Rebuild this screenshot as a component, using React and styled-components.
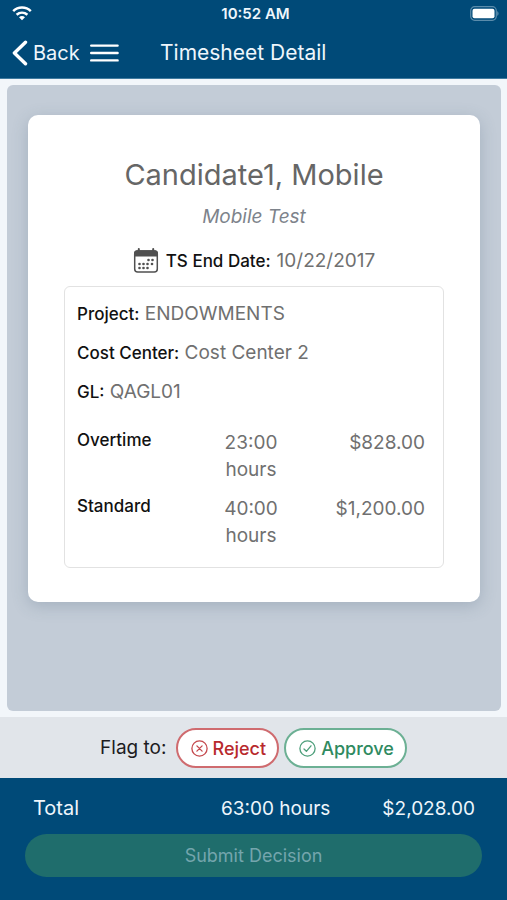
import styled, { createGlobalStyle } from "styled-components";

const GlobalStyle = createGlobalStyle`
  * {
    box-sizing: border-box;
  }
  body {
    margin: 0;
    background: #f2f6fa;
    font-family: Inter, "Liberation Sans", sans-serif;
    font-size: 19px;
    line-height: 27px;
    color: #707070;
  }
  button {
    font-family: inherit;
  }
`;

const Page = styled.div`
  display: flex;
  flex-direction: column;
  min-height: 100vh;
`;

const TopBar = styled.header`
  background: #004a78;
  color: #eef6fc;
  border-bottom: 1px solid #3f7ba0;
`;
const StatusBar = styled.div`
  display: grid;
  grid-template-columns: 1fr auto 1fr;
  align-items: center;
  height: 27px;
  padding: 0 8px 0 12px;
  font-size: 15px;
  font-weight: 600;
`;
const BatteryBox = styled.span`
  display: flex;
  justify-content: flex-end;
`;
const NavBar = styled.nav`
  display: grid;
  grid-template-columns: 148px 1fr;
  align-items: center;
  height: 51px;
  padding: 0 12px;
`;
const NavActions = styled.div`
  display: flex;
  align-items: center;
  gap: 10px;
`;
const NavButton = styled.button`
  display: flex;
  align-items: center;
  gap: 5px;
  padding: 0;
  border: 0;
  background: none;
  color: inherit;
  font-size: 20px;
`;
const Title = styled.h1`
  margin: 0;
  font-size: 21px;
  font-weight: 400;
  white-space: nowrap;
`;

const Content = styled.main`
  flex: 1;
  display: flex;
  padding: 6px 6px 6px 7px;
`;
const Panel = styled.div`
  flex: 1;
  padding: 30px 21px;
  border-radius: 6px;
  background: #c3ccd7;
`;
const Card = styled.section`
  padding: 40px 36px 34px;
  border-radius: 10px;
  background: #ffffff;
  box-shadow: 0 4px 16px rgba(70, 95, 120, 0.25);
`;
const Name = styled.h2`
  margin: 0;
  font-size: 29px;
  font-weight: 400;
  line-height: 40px;
  text-align: center;
  color: #666666;
`;
const JobTitle = styled.p`
  margin: 8px 0 17px;
  font-style: italic;
  text-align: center;
  color: #7d838b;
`;
const EndDate = styled.div`
  display: flex;
  align-items: center;
  justify-content: center;
  gap: 6px;
  margin-bottom: 12px;

  svg {
    margin-right: 1px;
  }
`;
const Label = styled.span`
  font-size: 17px;
  font-weight: 500;
  line-height: 20px;
  color: #111111;
`;
const DetailBox = styled.div`
  padding: 13px 18px 6px 12px;
  border: 1px solid #e2e2e2;
  border-radius: 6px;
`;
const DetailLine = styled.div`
  margin-bottom: 12px;
`;
const HoursTable = styled.table`
  width: 100%;
  margin-top: 24px;
  border-collapse: collapse;
  table-layout: fixed;

  th,
  td {
    padding: 0 0 12px;
    vertical-align: top;
  }
  th {
    text-align: left;
    font-size: 17px;
    font-weight: 500;
    line-height: 22px;
    color: #111111;
  }
`;
const Hours = styled.td`
  && {
    padding: 0 24px 12px;
    text-align: center;
  }
`;
const Amount = styled.td`
  text-align: right;
`;

const FlagBar = styled.div`
  display: flex;
  align-items: center;
  justify-content: center;
  gap: 5px;
  height: 61px;
  background: #e1e5ea;
`;
const FlagText = styled.span`
  margin-right: 4px;
  color: #1c1c1e;
`;
const FlagButton = styled.button`
  display: flex;
  align-items: center;
  gap: 5px;
  height: 40px;
  padding: 2px 11px 0 13px;
  border: 2px solid ${(props) => props.$border};
  border-radius: 20px;
  background: #ffffff;
  color: ${(props) => props.$color};
  font-size: 18px;
  font-weight: 500;
`;

const Footer = styled.footer`
  padding: 17px 25px 23px;
  background: #004a78;
  color: #eef6fc;
`;
const TotalLine = styled.div`
  display: grid;
  grid-template-columns: 1fr auto auto;
  column-gap: 52px;
  padding: 0 7px 0 8px;
  margin-bottom: 12px;
`;
const TotalLabel = styled.span`
  font-size: 20px;
`;
const SubmitButton = styled.button`
  width: 100%;
  height: 43px;
  border: 0;
  border-radius: 22px;
  background: #1f6d6c;
  color: #74a5ad;
  font-size: 18px;
`;

const WifiIcon = () => (
  <svg width="20" height="15" viewBox="0 0 20 15" fill="none" stroke="#fff" strokeWidth="2.5">
    <path d="M1.2 5.2C6 .4 14 .4 18.8 5.2" />
    <path d="M4.6 8.8C7.8 5.9 12.2 5.9 15.4 8.8" />
    <path d="M7 11.2c1.8-1.5 4.2-1.5 6 0l-3 3z" fill="#fff" stroke="none" />
  </svg>
);

const BatteryIcon = () => (
  <svg width="29" height="15" viewBox="0 0 29 15">
    <rect x=".7" y=".7" width="25.6" height="13.6" rx="4" fill="none" stroke="#5b8cab" strokeWidth="1.2" />
    <rect x="2.5" y="2.7" width="22" height="9.6" rx="2" fill="#fff" />
    <path d="M27.2 5.2c1.8.6 1.8 4 0 4.6z" fill="#5b8cab" />
  </svg>
);

const BackIcon = () => (
  <svg width="16" height="26" viewBox="0 0 16 26" fill="none" stroke="#fff" strokeWidth="3.4" strokeLinecap="round" strokeLinejoin="round">
    <path d="M13.5 2.2 2.4 13l11.1 10.8" />
  </svg>
);

const MenuIcon = () => (
  <svg width="29" height="20" viewBox="0 0 29 20" stroke="#fff" strokeWidth="2.4" strokeLinecap="round">
    <path d="M1.2 2.6h26.4M1.2 10h26.4M1.2 17.4h26.4" />
  </svg>
);

const calendarDots = [
  [15.5, 12], [19.5, 12],
  [6.5, 16], [10.5, 16], [14.5, 16], [19, 16],
  [6.5, 20], [10.5, 20], [14.5, 20],
];

const CalendarIcon = () => (
  <svg width="26" height="25" viewBox="0 0 26 25">
    <rect x="1.7" y="3" width="22.6" height="21" rx="3" fill="#fff" stroke="#505050" strokeWidth="1.5" />
    <path d="M1 8.6V5.2C1 3.4 2.3 2.3 4 2.3h18c1.7 0 3 1.1 3 2.9v3.4z" fill="#505050" />
    <path d="M5.8 1v3M20.2 1v3" stroke="#505050" strokeWidth="2" strokeLinecap="round" />
    {calendarDots.map(([x, y]) => (
      <circle key={`${x}-${y}`} cx={x} cy={y} r="1.3" fill="#505050" />
    ))}
  </svg>
);

const RejectIcon = () => (
  <svg width="17" height="17" viewBox="0 0 17 17" fill="none" stroke="#c4484c" strokeWidth="1.3" strokeLinecap="round">
    <circle cx="8.5" cy="8.5" r="7.6" />
    <path d="m5.9 5.9 5.2 5.2M11.1 5.9l-5.2 5.2" />
  </svg>
);

const ApproveIcon = () => (
  <svg width="17" height="17" viewBox="0 0 17 17" fill="none" stroke="#4d9f7b" strokeWidth="1.3" strokeLinecap="round" strokeLinejoin="round">
    <circle cx="8.5" cy="8.5" r="7.6" />
    <path d="m5 9 2.4 2.3L12 5.8" />
  </svg>
);

const details = [
  { label: "Project:", value: "ENDOWMENTS" },
  { label: "Cost Center:", value: "Cost Center 2" },
  { label: "GL:", value: "QAGL01" },
];

const hours = [
  { type: "Overtime", time: "23:00 hours", amount: "$828.00" },
  { type: "Standard", time: "40:00 hours", amount: "$1,200.00" },
];

const App = () => {
  return (
    <Page>
      <GlobalStyle />
      <TopBar>
        <StatusBar>
          <WifiIcon />
          <span>10:52 AM</span>
          <BatteryBox><BatteryIcon /></BatteryBox>
        </StatusBar>
        <NavBar>
          <NavActions>
            <NavButton type="button"><BackIcon />Back</NavButton>
            <NavButton type="button" aria-label="Menu"><MenuIcon /></NavButton>
          </NavActions>
          <Title>Timesheet Detail</Title>
        </NavBar>
      </TopBar>
      <Content>
        <Panel>
          <Card>
            <Name>Candidate1, Mobile</Name>
            <JobTitle>Mobile Test</JobTitle>
            <EndDate>
              <CalendarIcon />
              <Label>TS End Date:</Label>
              <span>10/22/2017</span>
            </EndDate>
            <DetailBox>
              {details.map((item) => (
                <DetailLine key={item.label}>
                  <Label>{item.label}</Label> {item.value}
                </DetailLine>
              ))}
              <HoursTable>
                <tbody>
                  {hours.map((row) => (
                    <tr key={row.type}>
                      <th scope="row">{row.type}</th>
                      <Hours>{row.time}</Hours>
                      <Amount>{row.amount}</Amount>
                    </tr>
                  ))}
                </tbody>
              </HoursTable>
            </DetailBox>
          </Card>
        </Panel>
      </Content>
      <FlagBar>
        <FlagText>Flag to:</FlagText>
        <FlagButton type="button" $color="#b8292d" $border="#cf6b6f"><RejectIcon />Reject</FlagButton>
        <FlagButton type="button" $color="#2f8a5f" $border="#6cb094"><ApproveIcon />Approve</FlagButton>
      </FlagBar>
      <Footer>
        <TotalLine>
          <TotalLabel>Total</TotalLabel>
          <span>63:00 hours</span>
          <span>$2,028.00</span>
        </TotalLine>
        <SubmitButton type="button" disabled>Submit Decision</SubmitButton>
      </Footer>
    </Page>
  );
};

export default App;
